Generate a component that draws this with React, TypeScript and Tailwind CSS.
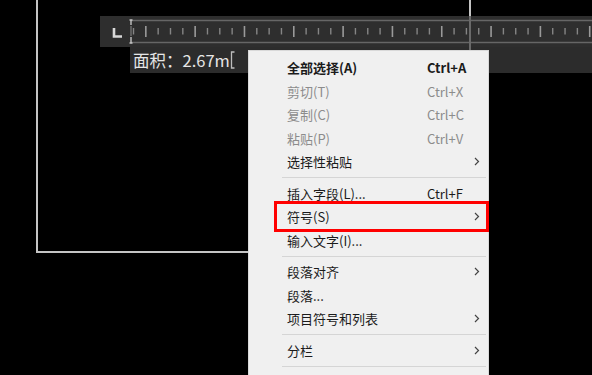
import React from "react";

const font = { fontFamily: '"Noto Sans CJK SC", "Noto Sans", sans-serif' };

function Ruler() {
  const ticks: React.ReactNode[] = [];
  const start = 133.5;
  const step = 12.33;
  for (let i = 0; i < 40; i++) {
    const x = start + i * step - 100;
    if (x > 495) break;
    const tall = (i + 3) % 4 === 0;
    ticks.push(
      <line
        key={i}
        x1={x}
        x2={x}
        y1={tall ? 10 : 12}
        y2={tall ? 21 : 18.5}
        stroke={tall ? "#9a9a9a" : "#858585"}
        strokeWidth={tall ? 1.6 : 1.4}
      />
    );
  }
  return (
    <svg width="492" height="31" className="block">
      <line x1="31" x2="492" y1="4.5" y2="4.5" stroke="#666666" strokeWidth="1.6" />
      <line x1="31" x2="492" y1="26.5" y2="26.5" stroke="#666666" strokeWidth="1.6" />
      <path d="M31 4 L31 9 M29.5 4 L32.5 4" stroke="#c4c4c4" strokeWidth="1.4" fill="none" />
      <path d="M31 21 L31 27 M29.5 27 L32.5 27" stroke="#c4c4c4" strokeWidth="1.4" fill="none" />
      <line x1="31" x2="31" y1="10" y2="20" stroke="#8a8a8a" strokeWidth="1" />
      {ticks}
      <path d="M14 12 L14 20.5 L22 20.5" stroke="#d8d8d8" strokeWidth="2.6" fill="none" />
    </svg>
  );
}

function Chevron() {
  return (
    <svg width="6" height="9" viewBox="0 0 6 9">
      <path d="M1 1 L4.5 4.5 L1 8" stroke="#444" strokeWidth="1.2" fill="none" />
    </svg>
  );
}

type Item = { label: string; sc?: string; sub?: boolean; dim?: boolean; bold?: boolean } | "sep";

const items: Item[] = [
  { label: "全部选择(A)", sc: "Ctrl+A", bold: true },
  { label: "剪切(T)", sc: "Ctrl+X", dim: true },
  { label: "复制(C)", sc: "Ctrl+C", dim: true },
  { label: "粘贴(P)", sc: "Ctrl+V", dim: true },
  { label: "选择性粘贴", sub: true },
  "sep",
  { label: "插入字段(L)...", sc: "Ctrl+F" },
  { label: "符号(S)", sub: true },
  { label: "输入文字(I)..." },
  "sep",
  { label: "段落对齐", sub: true },
  { label: "段落..." },
  { label: "项目符号和列表", sub: true },
  "sep",
  { label: "分栏", sub: true },
  "sep",
];

export default function App() {
  return (
    <div className="relative w-[592px] h-[375px] bg-black overflow-hidden" style={font}>
      {/* drawing rectangle on the canvas */}
      <div className="absolute left-[36px] top-0 w-[2px] h-[253px] bg-[#c4c4c4]" />
      <div className="absolute left-[36px] top-[251px] w-[214px] h-[2px] bg-[#c4c4c4]" />
      <div className="absolute left-[469px] top-0 w-[2px] h-[17px] bg-[#c4c4c4]" />

      {/* in-place text editor: ruler + text box */}
      <div className="absolute left-[100px] top-[16px] w-[492px] flex flex-col items-end">
        <div className="w-full h-[31px] bg-[#2e2e2e]">
          <Ruler />
        </div>
        <div className="w-[462px] h-[26px] bg-[#2c2c2c] flex items-center pl-[3px]">
          <span className="text-[16.5px] leading-none text-[#e6e6e6]">面积：2.67m</span>
          <svg width="6" height="18">
            <path d="M4.5 1 L1.5 1 L1.5 17 L4.5 17" stroke="#bdbdbd" strokeWidth="1.3" fill="none" />
          </svg>
        </div>
      </div>
      <div className="absolute left-[469px] top-[16px] w-[2px] h-[34px] bg-[#6a6a6a]" />

      {/* context menu */}
      <div className="absolute left-[248px] top-[50px] w-[241px] h-[340px] bg-[#f0f0f0] border border-[#d9d9d9] pt-[5px] flex flex-col">
        {items.map((it, i) =>
          it === "sep" ? (
            <div key={i} className="h-[8px] flex items-center pl-[33px] pr-[2px]">
              <div className="h-px w-full bg-[#d5d5d5]" />
            </div>
          ) : (
            <div
              key={i}
              className={`h-[23.5px] flex items-center text-[13px] ${
                it.dim ? "text-[#8c8c8c]" : "text-[#1b1b1b]"
              } ${it.bold ? "font-semibold" : ""}`}
            >
              <span className="pl-[38px] w-[178px]">{it.label}</span>
              <span className="w-[47px]">{it.sc ?? ""}</span>
              {it.sub && <Chevron />}
            </div>
          )
        )}
        <div className="absolute left-[25px] top-[150px] w-[215px] h-[31px] border-[3px] border-[#ff0000]" />
      </div>
    </div>
  );
}
